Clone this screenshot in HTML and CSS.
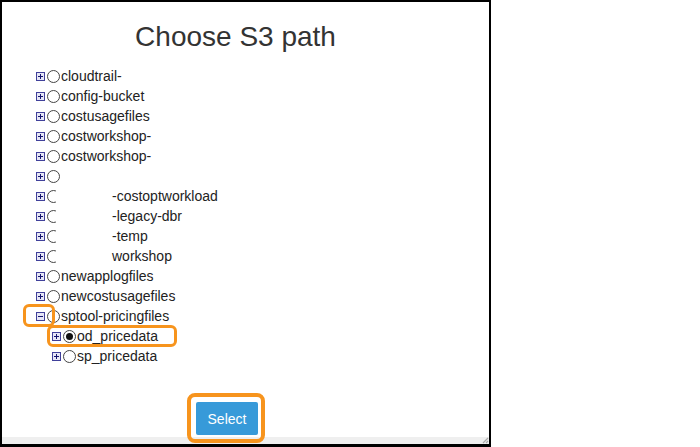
FILE: index.html
```html
<!DOCTYPE html>
<html>
<head>
<meta charset="utf-8">
<link rel="stylesheet" href="styles.css">
</head>
<body>
<div class="frame">
  <h1 class="title">Choose S3 path</h1>
  <ul class="tree">
    <li class="row"><svg class="tog" viewBox="0 0 9 9"><rect x="0.5" y="0.5" width="8" height="8"/><path d="M2 4.5h5M4.5 2v5"/></svg><span class="radio"></span><span class="label">cloudtrail-</span></li>
    <li class="row"><svg class="tog" viewBox="0 0 9 9"><rect x="0.5" y="0.5" width="8" height="8"/><path d="M2 4.5h5M4.5 2v5"/></svg><span class="radio"></span><span class="label">config-bucket</span></li>
    <li class="row"><svg class="tog" viewBox="0 0 9 9"><rect x="0.5" y="0.5" width="8" height="8"/><path d="M2 4.5h5M4.5 2v5"/></svg><span class="radio"></span><span class="label">costusagefiles</span></li>
    <li class="row"><svg class="tog" viewBox="0 0 9 9"><rect x="0.5" y="0.5" width="8" height="8"/><path d="M2 4.5h5M4.5 2v5"/></svg><span class="radio"></span><span class="label">costworkshop-</span></li>
    <li class="row"><svg class="tog" viewBox="0 0 9 9"><rect x="0.5" y="0.5" width="8" height="8"/><path d="M2 4.5h5M4.5 2v5"/></svg><span class="radio"></span><span class="label">costworkshop-</span></li>
    <li class="row"><svg class="tog" viewBox="0 0 9 9"><rect x="0.5" y="0.5" width="8" height="8"/><path d="M2 4.5h5M4.5 2v5"/></svg><span class="radio"></span><span class="label"></span></li>
    <li class="row"><svg class="tog" viewBox="0 0 9 9"><rect x="0.5" y="0.5" width="8" height="8"/><path d="M2 4.5h5M4.5 2v5"/></svg><span class="radio"></span><span class="redact"></span><span class="label">-costoptworkload</span></li>
    <li class="row"><svg class="tog" viewBox="0 0 9 9"><rect x="0.5" y="0.5" width="8" height="8"/><path d="M2 4.5h5M4.5 2v5"/></svg><span class="radio"></span><span class="redact"></span><span class="label">-legacy-dbr</span></li>
    <li class="row"><svg class="tog" viewBox="0 0 9 9"><rect x="0.5" y="0.5" width="8" height="8"/><path d="M2 4.5h5M4.5 2v5"/></svg><span class="radio"></span><span class="redact"></span><span class="label">-temp</span></li>
    <li class="row"><svg class="tog" viewBox="0 0 9 9"><rect x="0.5" y="0.5" width="8" height="8"/><path d="M2 4.5h5M4.5 2v5"/></svg><span class="radio"></span><span class="redact"></span><span class="label">workshop</span></li>
    <li class="row"><svg class="tog" viewBox="0 0 9 9"><rect x="0.5" y="0.5" width="8" height="8"/><path d="M2 4.5h5M4.5 2v5"/></svg><span class="radio"></span><span class="label">newapplogfiles</span></li>
    <li class="row"><svg class="tog" viewBox="0 0 9 9"><rect x="0.5" y="0.5" width="8" height="8"/><path d="M2 4.5h5M4.5 2v5"/></svg><span class="radio"></span><span class="label">newcostusagefiles</span></li>
    <li class="row"><svg class="tog" viewBox="0 0 9 9"><rect x="0.5" y="0.5" width="8" height="8"/><path d="M2 4.5h5"/></svg><span class="radio"></span><span class="label">sptool-pricingfiles</span></li>
    <li class="row sub"><svg class="tog" viewBox="0 0 9 9"><rect x="0.5" y="0.5" width="8" height="8"/><path d="M2 4.5h5M4.5 2v5"/></svg><span class="radio checked"></span><span class="label">od_pricedata</span></li>
    <li class="row sub"><svg class="tog" viewBox="0 0 9 9"><rect x="0.5" y="0.5" width="8" height="8"/><path d="M2 4.5h5M4.5 2v5"/></svg><span class="radio"></span><span class="label">sp_pricedata</span></li>
  </ul>
  <div class="actions"><button class="select-btn">Select</button></div>
  <div class="hscroll"><svg class="grip" viewBox="0 0 7 7"><path d="M6 1L1 6M6 4L4 6"/></svg></div>
  <div class="mark mark-toggle"></div>
  <div class="mark mark-item"></div>
  <div class="mark mark-btn"></div>
</div>
</body>
</html>
```
FILE: styles.css
```css
html, body {
  margin: 0;
  padding: 0;
  background: #fff;
}
body {
  font-family: "Liberation Sans", Arial, sans-serif;
  color: #222;
}
.frame {
  position: relative;
  box-sizing: border-box;
  width: 491px;
  height: 447px;
  border: 2px solid #000;
  border-bottom-width: 3px;
  display: flex;
  flex-direction: column;
  background: #fff;
}
.title {
  margin: 19px 0 0;
  padding-right: 20px;
  font-size: 28px;
  line-height: 32px;
  font-weight: normal;
  text-align: center;
  color: #333;
}
.tree {
  list-style: none;
  margin: 13px 0 0;
  padding: 0 0 0 34px;
}
.row {
  display: flex;
  align-items: center;
  height: 20px;
  font-size: 14px;
  white-space: nowrap;
}
.row.sub {
  padding-left: 16px;
}
.tog {
  width: 9px;
  height: 9px;
  flex: none;
}
.tog rect {
  fill: #e6e6f6;
  stroke: #40409a;
  stroke-width: 1;
}
.tog path {
  stroke: #14146e;
  stroke-width: 1;
  fill: none;
}
.radio {
  box-sizing: border-box;
  width: 13px;
  height: 13px;
  margin-left: 2px;
  margin-right: 1px;
  border: 1px solid #444;
  border-radius: 50%;
  background: #fff;
  flex: none;
  display: flex;
  align-items: center;
  justify-content: center;
}
.radio.checked::before {
  content: "";
  width: 7px;
  height: 7px;
  border-radius: 50%;
  background: #111;
}
.label {
  color: #222;
}
.redact {
  display: inline-block;
  width: 56px;
  height: 20px;
  margin-left: -5px;
  background: #fff;
  flex: none;
}
.actions {
  margin-top: 36px;
  padding-left: 194px;
}
.select-btn {
  width: 62px;
  height: 33px;
  border: none;
  border-radius: 2px;
  background: #379ad9;
  color: #fff;
  font-family: "Liberation Sans", Arial, sans-serif;
  font-size: 14px;
  padding: 0;
}
.hscroll {
  margin-top: auto;
  height: 7px;
  background: #efefef;
  display: flex;
  justify-content: flex-end;
}
.grip {
  width: 7px;
  height: 7px;
}
.grip path {
  stroke: #aaa;
  stroke-width: 1.2;
  fill: none;
}
.mark {
  position: absolute;
  box-sizing: border-box;
  border: 3px solid #f7941d;
  border-radius: 6px;
}
.mark-toggle {
  left: 21px;
  top: 302px;
  width: 32px;
  height: 23px;
}
.mark-item {
  left: 45px;
  top: 323px;
  width: 130px;
  height: 22px;
}
.mark-btn {
  left: 185px;
  top: 391px;
  width: 78px;
  height: 50px;
  border-width: 4px;
  border-radius: 8px;
}
```
